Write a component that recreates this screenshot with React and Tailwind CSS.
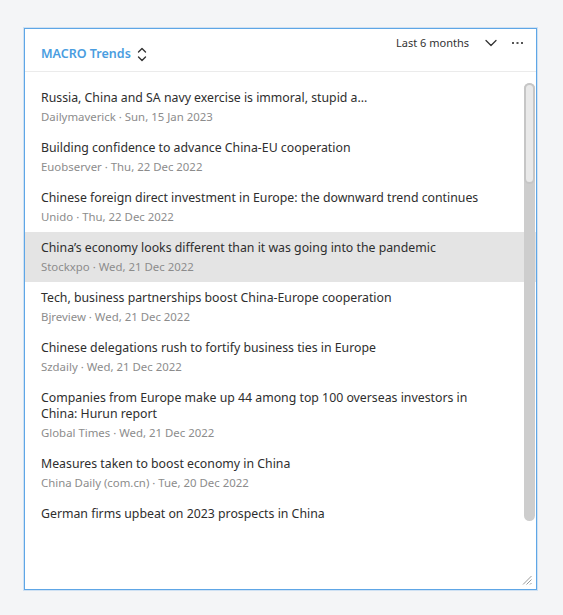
import React from "react";

const items = [
  { t: "Russia, China and SA navy exercise is immoral, stupid a...", m: "Dailymaverick · Sun, 15 Jan 2023" },
  { t: "Building confidence to advance China-EU cooperation", m: "Euobserver · Thu, 22 Dec 2022" },
  { t: "Chinese foreign direct investment in Europe: the downward trend continues", m: "Unido · Thu, 22 Dec 2022" },
  { t: "China’s economy looks different than it was going into the pandemic", m: "Stockxpo · Wed, 21 Dec 2022", hl: true },
  { t: "Tech, business partnerships boost China-Europe cooperation", m: "Bjreview · Wed, 21 Dec 2022" },
  { t: "Chinese delegations rush to fortify business ties in Europe", m: "Szdaily · Wed, 21 Dec 2022" },
  { t: "Companies from Europe make up 44 among top 100 overseas investors in China: Hurun report", m: "Global Times · Wed, 21 Dec 2022" },
  { t: "Measures taken to boost economy in China", m: "China Daily (com.cn) · Tue, 20 Dec 2022" },
  { t: "German firms upbeat on 2023 prospects in China", m: null },
];

export default function App() {
  return (
    <div className="w-[563px] h-[615px] bg-[#f4f5f7] pt-[28px] pl-[24px]" style={{ fontFamily: '"Noto Sans", "Open Sans", sans-serif' }}>
      <div className="relative w-[513px] h-[562px] bg-white border border-[#5ea6e6] shadow-[0_0_0_1px_rgba(94,166,230,0.25)] flex flex-col">
        <div className="h-[43px] border-b border-[#ebebeb] flex justify-between items-start pl-[16px] pr-[13px]">
          <div className="flex items-center pt-[15px] gap-[6px]">
            <span className="text-[12.5px] font-semibold text-[#4a9de0] leading-[20px]">MACRO Trends</span>
            <svg width="10" height="15" viewBox="0 0 10 15" fill="none" stroke="#333" strokeWidth="1.4" strokeLinecap="round" strokeLinejoin="round">
              <path d="M1.5 5 L5 1.5 L8.5 5" />
              <path d="M1.5 10 L5 13.5 L8.5 10" />
            </svg>
          </div>
          <div className="flex items-center pt-[6px]">
            <span className="text-[11px] text-[#333] leading-[16px]">Last 6 months</span>
            <svg className="ml-[16px]" width="12" height="8" viewBox="0 0 12 8" fill="none" stroke="#333" strokeWidth="1.3" strokeLinecap="round" strokeLinejoin="round">
              <path d="M1 1.5 L6 6.5 L11 1.5" />
            </svg>
            <svg className="ml-[15px]" width="11" height="4" viewBox="0 0 11 4" fill="#555">
              <rect x="0" y="1" width="2" height="2" />
              <rect x="4.5" y="1" width="2" height="2" />
              <rect x="9" y="1" width="2" height="2" />
            </svg>
          </div>
        </div>
        <div className="relative h-[445px] mt-[10px] overflow-hidden">
          {items.map((it, i) => (
            <div key={i} className={`pl-[16px] pr-[40px] pt-[8px] pb-[7px] ${it.hl ? "bg-[#e4e4e4]" : ""}`}>
              <div className="text-[12.3px] leading-[16px] text-[#2e2e2e]">{it.t}</div>
              {it.m && <div className="mt-[3px] text-[11.4px] leading-[16px] text-[#8c8c8c]">{it.m}</div>}
            </div>
          ))}
          <div className="absolute right-[1px] top-[1px] w-[11px] h-[438px] rounded-full bg-[#cdcdcd]">
            <div className="h-[101px] rounded-full bg-[#e9e9e9] border-[2px] border-[#c6c6c6]" />
          </div>
        </div>
        <svg className="absolute right-[4px] bottom-[4px]" width="10" height="10" viewBox="0 0 10 10" stroke="#9a9a9a" strokeWidth="1">
          <path d="M9.5 1 L1 9.5" />
          <path d="M9.5 4.5 L4.5 9.5" />
          <path d="M9.5 8 L8 9.5" />
        </svg>
      </div>
    </div>
  );
}
